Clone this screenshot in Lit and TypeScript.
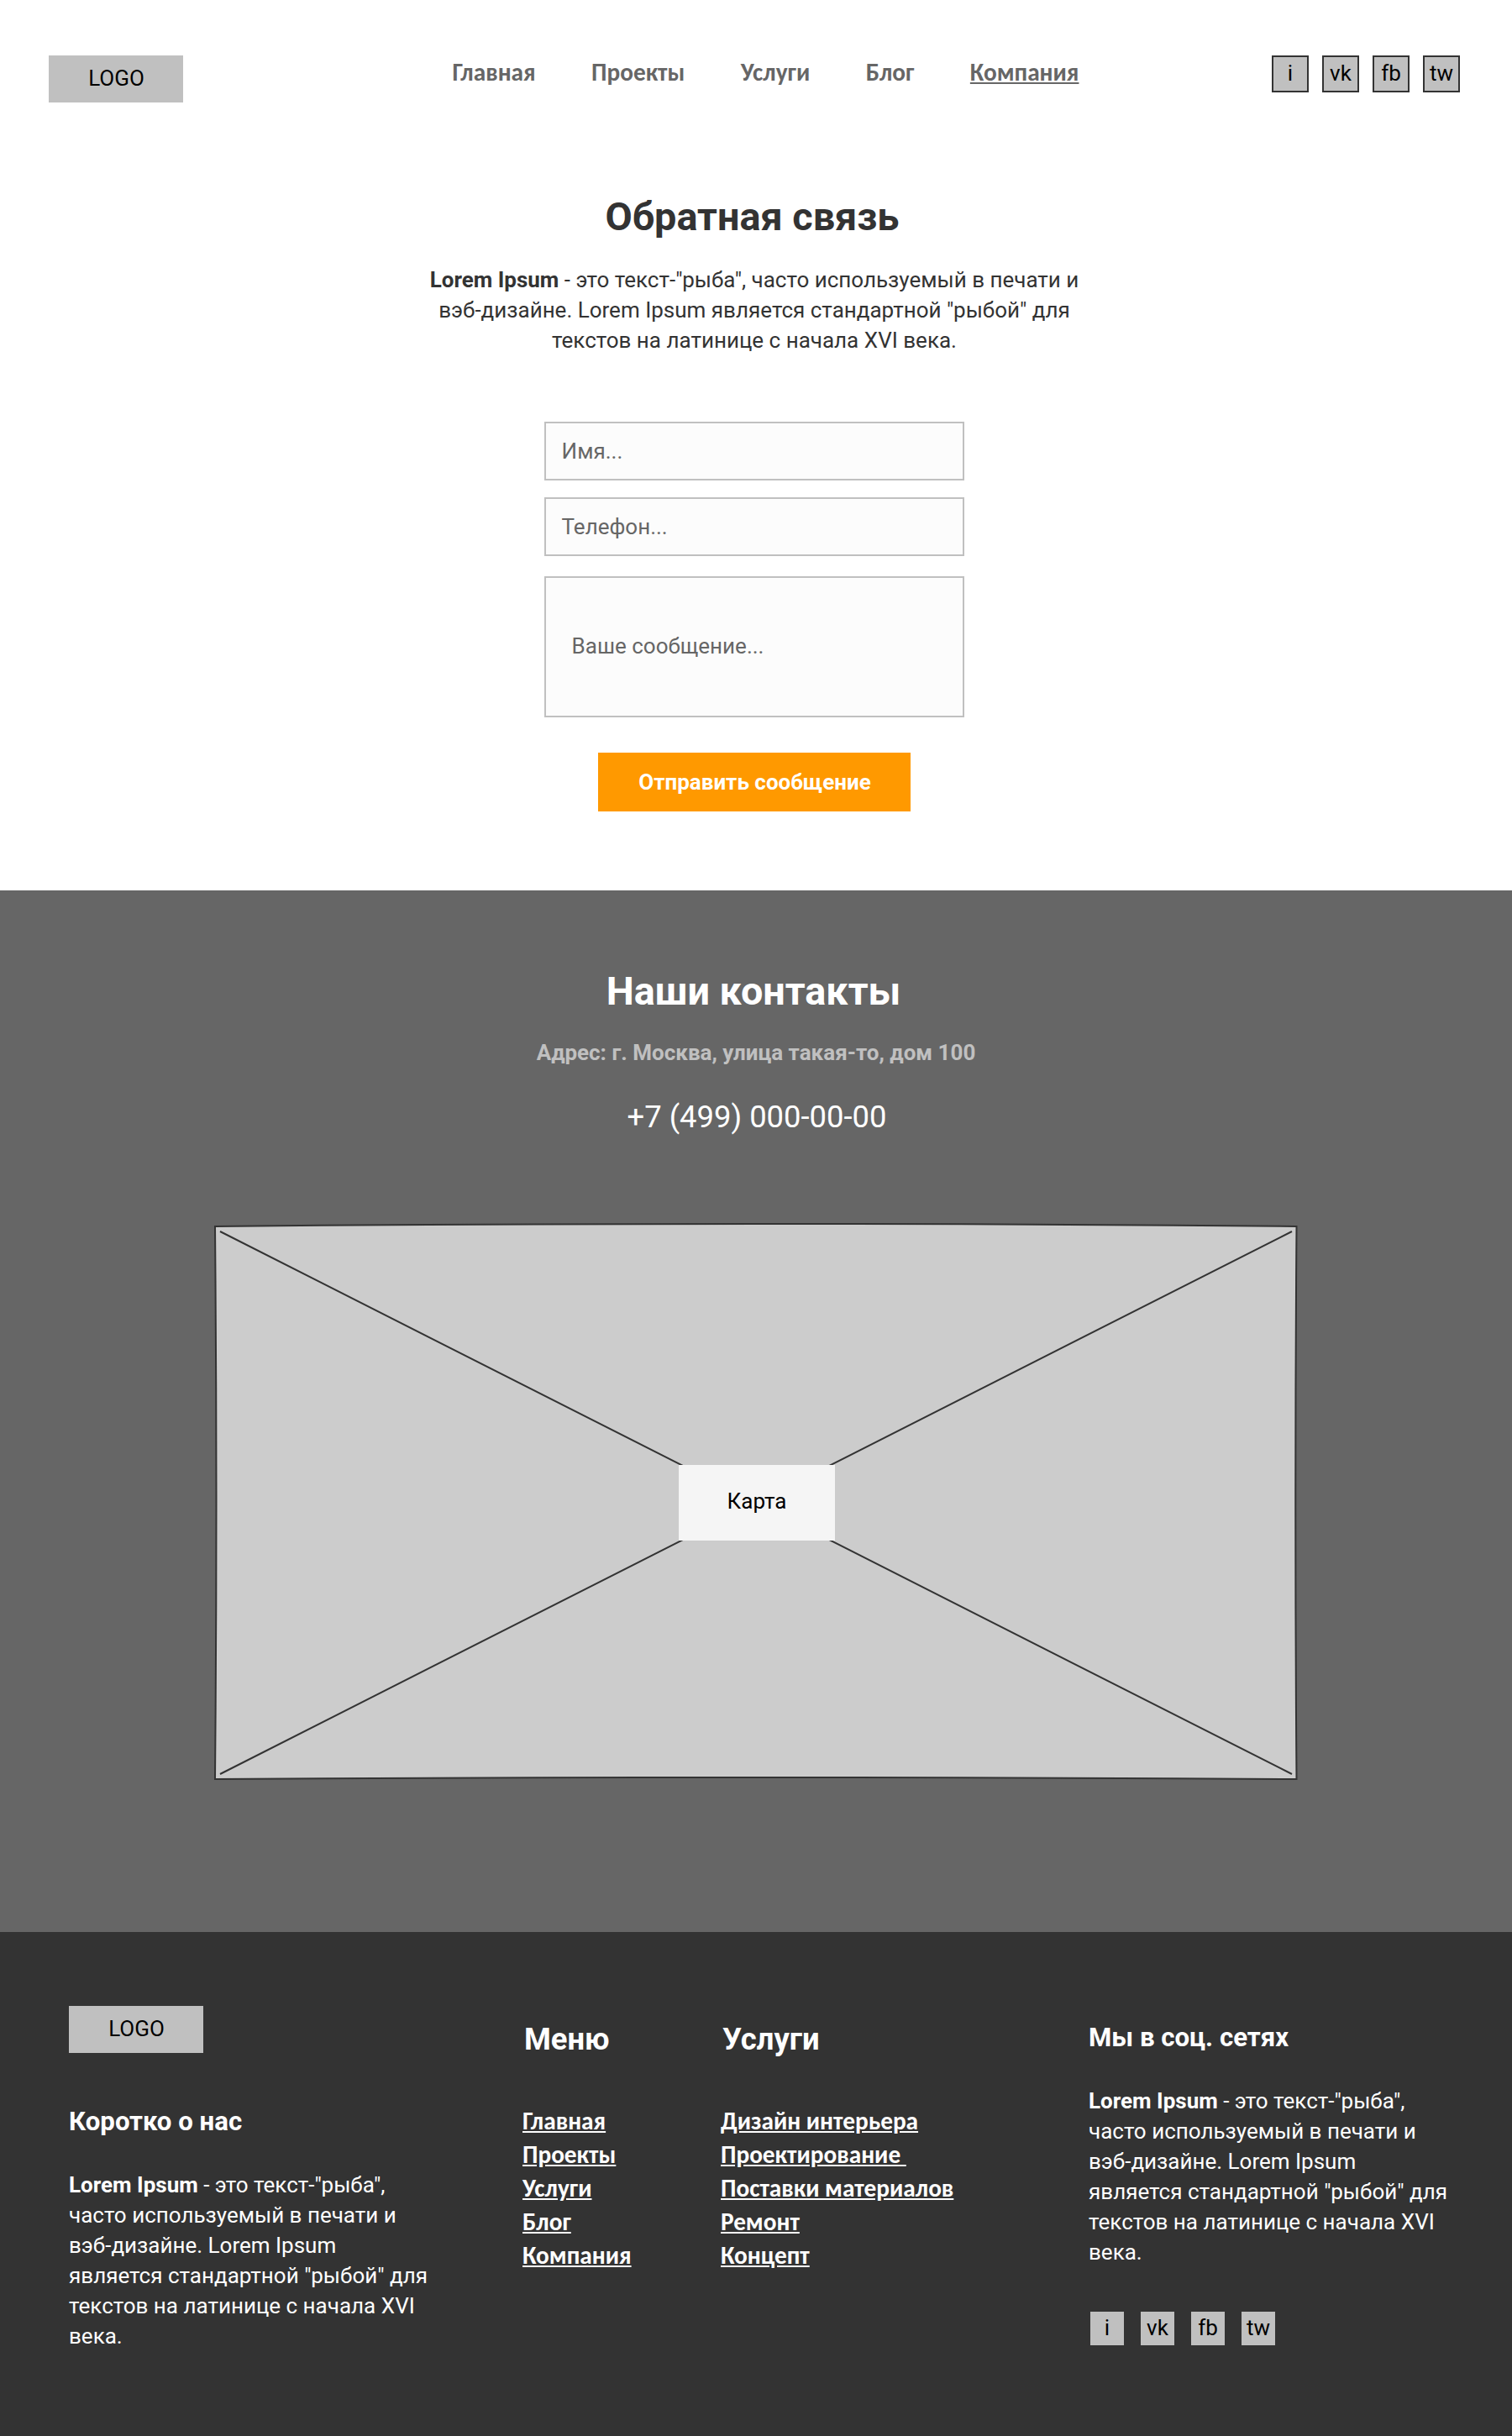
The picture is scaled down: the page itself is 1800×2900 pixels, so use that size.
import { LitElement, html, css } from "lit";
import { customElement, property } from "lit/decorators.js";

const MENU = ["Главная", "Проекты", "Услуги", "Блог", "Компания"];
const SERVICES = ["Дизайн интерьера", "Проектирование\u00a0", "Поставки материалов", "Ремонт", "Концепт"];
const NETWORKS = ["i", "vk", "fb", "tw"];

@customElement("site-logo")
export class SiteLogo extends LitElement {
  static styles = css`
    :host {
      box-sizing: border-box;
      display: block;
      width: 160px;
      height: 56px;
      padding-left: 1px;
      background: #c0c0c0;
      color: #000;
      font-size: 26px;
      line-height: 54px;
      text-align: center;
    }
  `;
  render() {
    return html`LOGO`;
  }
}

@customElement("social-links")
export class SocialLinks extends LitElement {
  @property({ type: Boolean }) outlined = false;

  static styles = css`
    :host {
      display: block;
    }
    .row {
      display: flex;
      gap: 20px;
    }
    .tile {
      box-sizing: border-box;
      width: 40px;
      height: 40px;
      background: #c0c0c0;
      color: #000;
      font-size: 26px;
      line-height: 38px;
      text-align: center;
      text-decoration: none;
    }
    .outlined {
      gap: 16px;
    }
    .outlined .tile {
      width: 44px;
      height: 44px;
      border: 2px solid #333;
    }
  `;
  render() {
    return html`<div class="row ${this.outlined ? "outlined" : ""}">
      ${NETWORKS.map((n) => html`<a class="tile">${n}</a>`)}
    </div>`;
  }
}

@customElement("app-root")
export class AppRoot extends LitElement {
  static styles = css`
    :host {
      display: block;
      width: 1800px;
      background: #fff;
      color: #333;
      font-family: Roboto, "Liberation Sans", sans-serif;
      font-size: 26px;
      line-height: 36px;
    }
    h1,
    h2,
    h3,
    p,
    ul {
      margin: 0;
      padding: 0;
    }
    .header {
      box-sizing: border-box;
      height: 230px;
      padding: 66px 62px 0 58px;
      display: flex;
      align-items: flex-start;
    }
    .nav {
      display: flex;
      justify-content: space-between;
      width: 746px;
      margin: 0 229.5px 0 320.5px;
      font: 700 29.28px/40px Carlito, Calibri, "Open Sans", sans-serif;
      color: #666;
    }
    .current {
      text-decoration: underline;
    }
    .feedback {
      box-sizing: border-box;
      height: 830px;
      padding-right: 4px;
      display: flex;
      flex-direction: column;
      align-items: center;
      white-space: nowrap;
      text-align: center;
    }
    .title {
      font-size: 46.8px;
      line-height: 56px;
      font-weight: 700;
    }
    .feedback .title {
      margin: 0 5px 29px 0;
    }
    .form {
      margin-top: 79px;
      width: 500px;
      display: flex;
      flex-direction: column;
      align-items: center;
    }
    .field {
      box-sizing: border-box;
      width: 500px;
      height: 70px;
      margin-bottom: 20px;
      padding: 0 18.6px;
      border: 2px solid #c0c0c0;
      background: #fcfcfc;
      color: #666;
      line-height: 66px;
      text-align: left;
    }
    .message {
      height: 168px;
      margin: 4px 0 42px;
      padding: 0 30.6px;
      line-height: 162px;
    }
    .submit {
      width: 372px;
      height: 70px;
      padding: 0 0 0 1px;
      border: 0;
      background: #ff9900;
      color: #fff;
      font: 700 26px/70px Roboto, sans-serif;
    }
    .contacts {
      box-sizing: border-box;
      height: 1240px;
      padding-top: 92px;
      background: #666;
      color: #fff;
      text-align: center;
      display: flex;
      flex-direction: column;
      align-items: center;
    }
    .contacts .title {
      margin-right: 6px;
    }
    .address {
      margin-top: 27px;
      font-weight: 700;
      color: #c0c0c0;
    }
    .phone {
      margin: 37px 0 98px 2px;
      font-size: 36.4px;
      line-height: 44px;
    }
    .map {
      position: relative;
      width: 1300px;
      height: 680px;
    }
    .map svg {
      display: block;
    }
    .map-label {
      position: absolute;
      left: 558px;
      top: 294px;
      width: 186px;
      height: 90px;
      background: #f5f5f5;
      color: #000;
      line-height: 87px;
    }
    .footer {
      box-sizing: border-box;
      height: 600px;
      padding: 88px 0 0 82px;
      display: grid;
      grid-template-columns: 540px 236px 438px 460px;
      align-items: start;
      background: #333;
      color: #fff;
      white-space: nowrap;
    }
    .subtitle {
      font-size: 31.2px;
      line-height: 38px;
      font-weight: 700;
    }
    .about .subtitle {
      margin: 63px 0 38px;
    }
    .col {
      padding-top: 18px;
    }
    .col-title {
      margin: 0 0 55px 2px;
      font-size: 36.4px;
      line-height: 44px;
      font-weight: 700;
    }
    .links {
      list-style: none;
      font: 700 29.28px/40px Carlito, Calibri, "Open Sans", sans-serif;
      text-decoration: underline;
    }
    .social .subtitle {
      margin: 1px 0 38px;
    }
    .social social-links {
      margin: 53px 0 0 2px;
    }
  `;

  private blurb() {
    return html`<p>
      <b>Lorem Ipsum</b> - это текст-"рыба",<br />часто используемый в печати и<br />вэб-дизайне. Lorem Ipsum<br />является
      стандартной "рыбой" для<br />текстов на латинице с начала XVI<br />века.
    </p>`;
  }

  private links(items: string[]) {
    return html`<ul class="links">
      ${items.map((t) => html`<li><a>${t}</a></li>`)}
    </ul>`;
  }

  render() {
    return html`
      <header class="header">
        <site-logo></site-logo>
        <nav class="nav">
          ${MENU.map((t) => html`<a class=${t === "Компания" ? "current" : ""}>${t}</a>`)}
        </nav>
        <social-links outlined></social-links>
      </header>

      <section class="feedback">
        <h1 class="title">Обратная связь</h1>
        <p>
          <b>Lorem Ipsum</b> - это текст-"рыба", часто используемый в печати и<br />вэб-дизайне. Lorem Ipsum является
          стандартной "рыбой" для<br />текстов на латинице с начала XVI века.
        </p>
        <div class="form">
          <div class="field">Имя...</div>
          <div class="field">Телефон...</div>
          <div class="field message">Ваше сообщение...</div>
          <button class="submit">Отправить сообщение</button>
        </div>
      </section>

      <section class="contacts">
        <h2 class="title">Наши контакты</h2>
        <p class="address">Адрес: г. Москва, улица такая-то, дом 100</p>
        <p class="phone">+7 (499) 000-00-00</p>
        <div class="map">
          <svg width="1300" height="680" viewBox="250 1450 1300 680" fill="none" stroke="#333" stroke-width="2">
            <path
              fill="#ccc"
              d="M256 1460Q900 1454 1543.5 1460Q1541 1790 1543.5 2118Q900 2114 256 2118Q259 1790 256 1460Z"
            />
            <path d="M262 1466L1538 2112M262 2112L1538 1466" />
          </svg>
          <div class="map-label">Карта</div>
        </div>
      </section>

      <footer class="footer">
        <div class="about">
          <site-logo></site-logo>
          <h3 class="subtitle">Коротко о нас</h3>
          ${this.blurb()}
        </div>
        <div class="col">
          <h2 class="col-title">Меню</h2>
          ${this.links(MENU)}
        </div>
        <div class="col">
          <h2 class="col-title">Услуги</h2>
          ${this.links(SERVICES)}
        </div>
        <div class="col social">
          <h3 class="subtitle">Мы в соц. сетях</h3>
          ${this.blurb()}
          <social-links></social-links>
        </div>
      </footer>
    `;
  }
}
